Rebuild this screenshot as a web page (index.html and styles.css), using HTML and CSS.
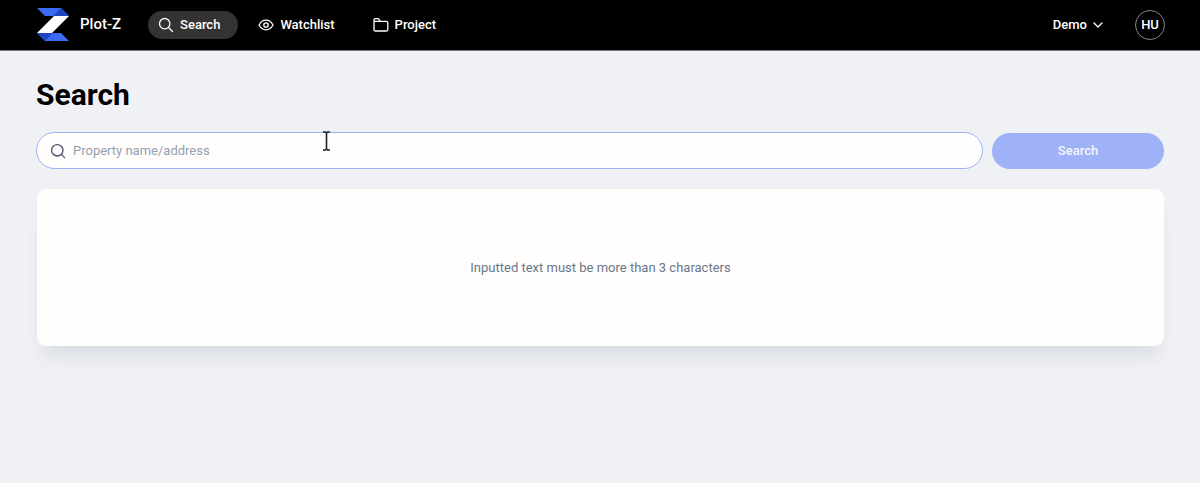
FILE: index.html
```html
<!DOCTYPE html>
<html lang="en">
<head>
<meta charset="utf-8">
<meta name="viewport" content="width=device-width, initial-scale=1">
<title>Plot-Z</title>
<link rel="stylesheet" href="styles.css">
</head>
<body>
<header class="topbar">
  <a class="brand" href="#">
    <svg class="brand-mark" viewBox="0 0 32 33" aria-hidden="true">
      <path d="M0 0H24L32 8H8Z" fill="#3a6bf0"/>
      <path d="M24 0L32 8H16Z" fill="#1c46c4"/>
      <path d="M0 25H24L32 33H8Z" fill="#3a6bf0"/>
      <path d="M0 25L8 33L16 25Z" fill="#1c46c4"/>
      <path d="M17 8H32L15 25H0Z" fill="#fff"/>
    </svg>
    <span>Plot-Z</span>
  </a>
  <nav class="nav">
    <a class="nav-link active" href="#">
      <svg class="icon" viewBox="0 0 16 16" aria-hidden="true"><circle cx="6.700" cy="6.700" r="5.200"/><path d="M10.500 10.500L14.500 14.500"/></svg>
      <span>Search</span>
    </a>
    <a class="nav-link" href="#">
      <svg class="icon" viewBox="0 0 16 16" aria-hidden="true"><path d="M1 8C2.600 5 5 3.200 8 3.200S13.400 5 15 8C13.400 11 11 12.800 8 12.800S2.600 11 1 8Z"/><circle cx="8" cy="8" r="2.200"/></svg>
      <span>Watchlist</span>
    </a>
    <a class="nav-link" href="#">
      <svg class="icon" viewBox="0 0 16 16" aria-hidden="true"><path d="M1 12.500V3.200Q1 1.700 2.500 1.700H5.300L7.300 4.300H13.300Q14.800 4.300 14.800 5.800V12.500Q14.800 14 13.300 14H2.500Q1 14 1 12.500ZM1 4.300H7.300"/></svg>
      <span>Project</span>
    </a>
  </nav>
  <div class="account">
    <button class="workspace" type="button">
      <span>Demo</span>
      <svg class="chevron" viewBox="0 0 10 10" aria-hidden="true"><path d="M1 3L5 7L9 3"/></svg>
    </button>
    <button class="avatar" type="button">HU</button>
  </div>
</header>
<main class="page">
  <h1 class="title">Search</h1>
  <form class="search-row">
    <label class="search-box">
      <svg class="icon" viewBox="0 0 16 16" aria-hidden="true"><circle cx="7.300" cy="7.300" r="5.700"/><path d="M11.600 11.600L14.600 14.600"/></svg>
      <input class="search-input" type="text" placeholder="Property name/address" aria-label="Property name/address">
    </label>
    <button class="search-button" type="submit" disabled>Search</button>
  </form>
  <section class="results">
    <p class="message">Inputted text must be more than 3 characters</p>
  </section>
</main>
<svg class="pointer" viewBox="0 0 9 20" aria-hidden="true"><path d="M1 1H3.500L4.500 2L5.500 1H8M4.500 2V18M1 19H3.500L4.500 18L5.500 19H8"/></svg>
</body>
</html>
```
FILE: styles.css
```css
* {
  box-sizing: border-box;
}

body {
  margin: 0;
  min-height: 100vh;
  background: #f0f1f5;
  color: #000;
  font-family: Roboto, "Liberation Sans", sans-serif;
  font-size: 13px;
  line-height: 20px;
}

button,
input {
  font: inherit;
}

.topbar {
  display: flex;
  align-items: center;
  padding: 6px 35px 6px 37px;
  height: 51px;
  background: #000;
  border-bottom: 1px solid #777;
  color: #fff;
  font-weight: 500;
}

.brand {
  display: flex;
  align-items: center;
  gap: 11px;
  margin-bottom: 2px;
  color: inherit;
  font-size: 15px;
  text-decoration: none;
}

.brand-mark {
  width: 32px;
  height: 33px;
}

.nav {
  display: flex;
  gap: 10px;
  margin-bottom: 1px;
  margin-left: 27px;
}

.nav-link {
  display: flex;
  align-items: center;
  gap: 6px;
  padding: 4px 18px 4px 10px;
  border-radius: 14px;
  color: inherit;
  text-decoration: none;
}

.active {
  background: #343332;
}

.icon {
  flex: none;
  width: 16px;
  height: 16px;
  fill: none;
  stroke: currentColor;
  stroke-width: 1.3;
  stroke-linecap: round;
  stroke-linejoin: round;
}

.account {
  display: flex;
  align-items: center;
  gap: 32px;
  margin-left: auto;
}

.workspace {
  display: flex;
  align-items: center;
  gap: 6px;
  padding: 0;
  border: 0;
  background: none;
  color: inherit;
}

.chevron {
  width: 10px;
  height: 10px;
  fill: none;
  stroke: currentColor;
  stroke-width: 1.3;
  stroke-linecap: round;
  stroke-linejoin: round;
}

.avatar {
  width: 30px;
  height: 30px;
  padding: 0;
  border: 1px solid #888;
  border-radius: 50%;
  background: none;
  color: inherit;
}

.page {
  padding: 26px 36px;
}

.title {
  margin: 0 0 19px;
  font-size: 30px;
  font-weight: 700;
  line-height: 36px;
}

.search-row {
  display: flex;
  align-items: flex-end;
  gap: 9px;
  margin-bottom: 20px;
}

.search-box {
  display: flex;
  flex: 1;
  align-items: center;
  gap: 7px;
  height: 37px;
  padding: 0 13px;
  border: 1px solid #9db2f5;
  border-radius: 19px;
  background: #fffefd;
  color: #475569;
}

.search-input {
  flex: 1;
  min-width: 0;
  padding: 0;
  border: 0;
  outline: 0;
  background: none;
}

.search-input::placeholder {
  color: #94a0b2;
  opacity: 1;
}

.search-button {
  width: 172px;
  height: 36px;
  border: 0;
  border-radius: 18px;
  background: #9fb2f8;
  color: #f4f6fe;
  font-weight: 500;
}

.results {
  display: flex;
  align-items: center;
  justify-content: center;
  min-height: 157px;
  margin-left: 1px;
  border-radius: 9px;
  background: #fffefd;
  box-shadow: 0 16px 18px -6px rgba(100, 125, 130, 0.16);
}

.message {
  margin: 0;
  color: #6b7688;
}

.pointer {
  position: absolute;
  top: 131px;
  left: 322px;
  width: 9px;
  height: 20px;
  fill: none;
  stroke: #222;
  stroke-width: 1.6;
}
```
